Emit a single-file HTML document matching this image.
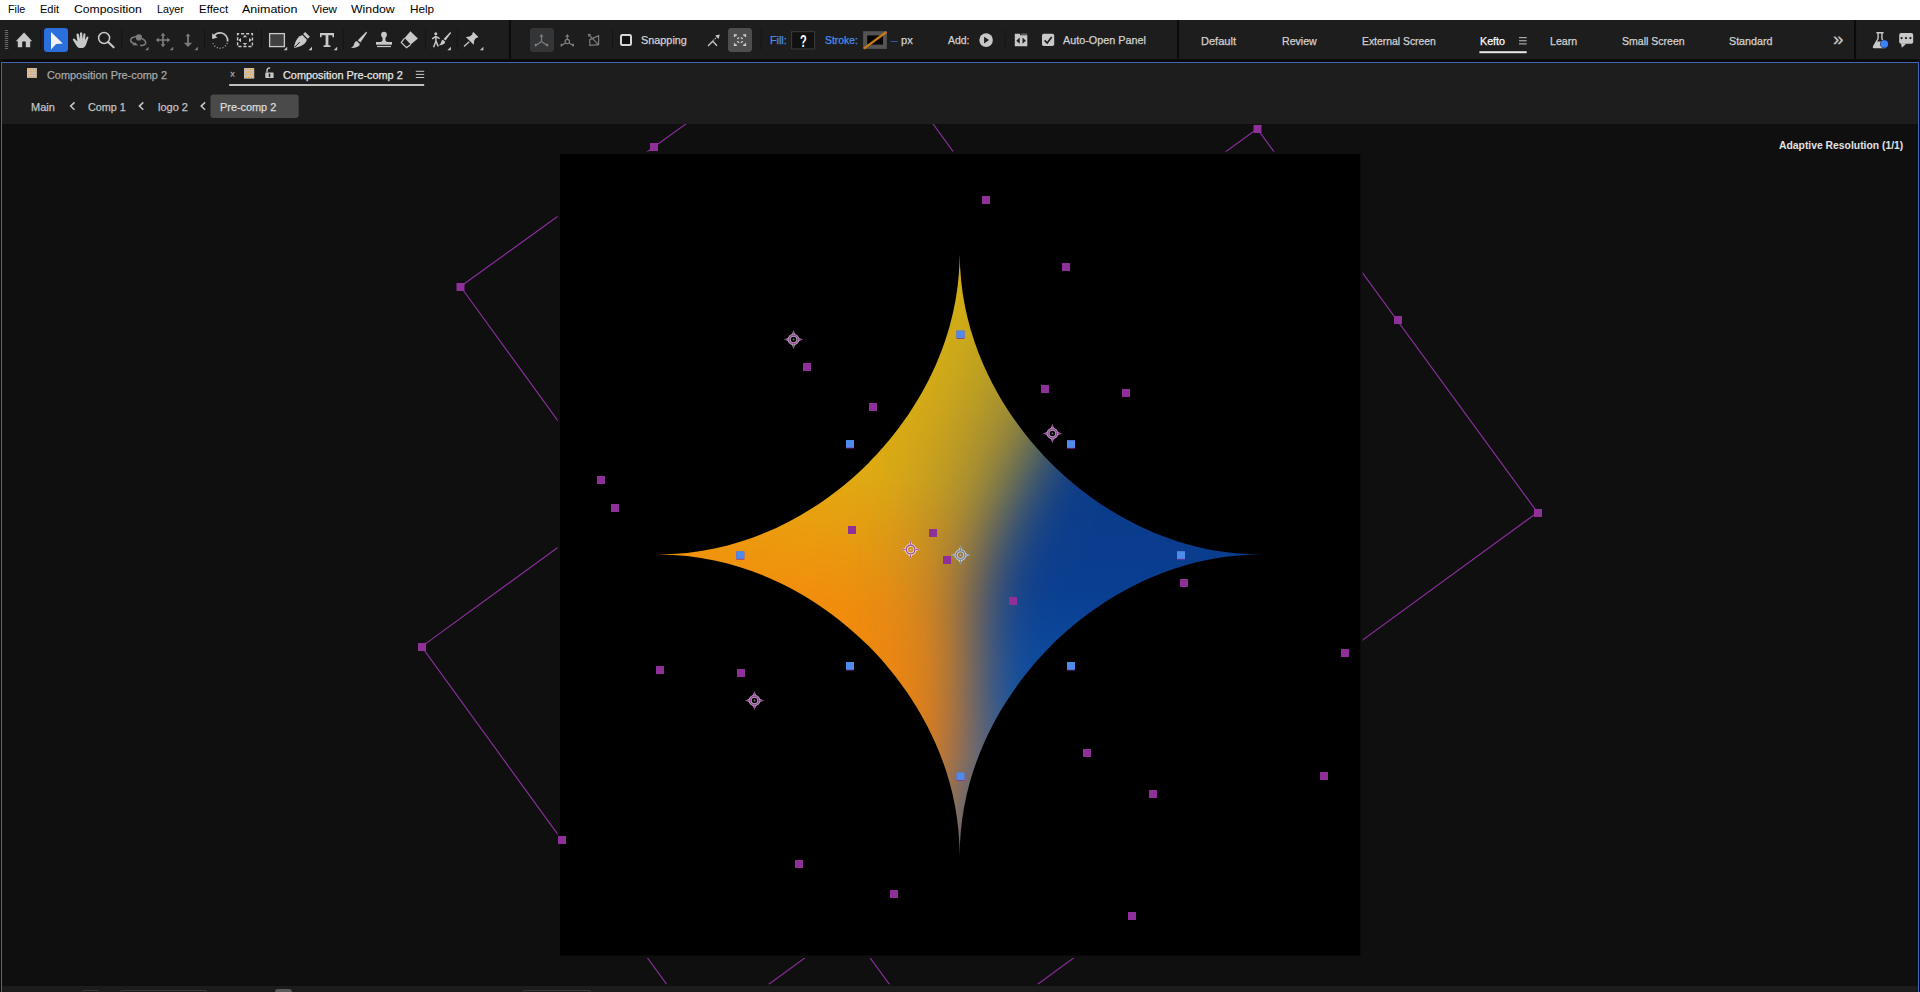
<!DOCTYPE html>
<html lang="en">
<head>
<meta charset="utf-8">
<title>Composition Pre-comp 2</title>
<style>
html,body{margin:0;padding:0;}
html{width:1920px;height:992px;overflow:hidden;}
body{width:1920px;height:992px;overflow:hidden;position:relative;background:#0a0a0a;font-family:"Liberation Sans",sans-serif;}
.abs{position:absolute;}
.t{position:absolute;transform-origin:0 0;-webkit-text-stroke:0.25px currentColor;white-space:pre;line-height:16px;height:16px;font-family:"Liberation Sans",sans-serif;}
.m{-webkit-text-stroke:0;}
#menubar{left:0;top:0;width:1920px;height:20px;background:#ffffff;}
#toolbar{left:0;top:20px;width:1920px;height:39px;background:#1d1d1d;}
#panel{left:1px;top:62px;width:1918px;height:930px;background:#1d1d1d;}
#pborder{left:1px;top:62px;width:1916px;height:929px;border:1px solid #4464b4;border-bottom:none;pointer-events:none;}
#viewerbg{left:2px;top:124px;width:1916px;height:862px;background:#0f0f0f;}
#footer{left:2px;top:986px;width:1916px;height:6px;background:#1c1c1c;}
svg{position:absolute;left:0;top:0;overflow:hidden;}
</style>
</head>
<body>
<div id="menubar" class="abs"></div>
<div id="toolbar" class="abs"></div>
<div id="panel" class="abs"></div>
<div id="viewerbg" class="abs"></div>
<div id="footer" class="abs"></div>
<div class="abs" style="left:82px;top:990px;width:15px;height:1px;border:1px solid #363636;border-bottom:none;border-radius:3px 3px 0 0"></div>
<div class="abs" style="left:120px;top:990px;width:85px;height:1px;border:1px solid #363636;border-bottom:none;border-radius:3px 3px 0 0"></div>
<div class="abs" style="left:275px;top:989px;width:17px;height:3px;background:#5a5a5a;border-radius:3px 3px 0 0"></div>
<div class="abs" style="left:523px;top:990px;width:66px;height:1px;border:1px solid #363636;border-bottom:none;border-radius:3px 3px 0 0"></div>
<svg id="viewer" width="1920" height="992" viewBox="0 0 1920 992">
<defs>
<clipPath id="vclip"><rect x="2" y="124" width="1916" height="862"/></clipPath>
<clipPath id="starclip"><path d="M959.7,252.5 C959.7,357.5 1019.0,431.2 1051.0,463.2 C1083.0,495.2 1156.7,554.5 1261.7,554.5 C1156.7,554.5 1083.0,613.8 1051.0,645.8 C1019.0,677.8 959.7,751.5 959.7,856.5 C959.7,751.5 900.4,677.8 868.4,645.8 C836.4,613.8 762.7,554.5 657.7,554.5 C762.7,554.5 836.4,495.2 868.4,463.2 C900.4,431.2 959.7,357.5 959.7,252.5 Z"/></clipPath>
<linearGradient id="gYO" gradientUnits="userSpaceOnUse" x1="800" y1="330" x2="745" y2="700">
<stop offset="0" stop-color="#d9b012"/><stop offset="0.35" stop-color="#e2ac10"/><stop offset="0.7" stop-color="#f28e0c"/><stop offset="1" stop-color="#f7830a"/></linearGradient>
<linearGradient id="gB" gradientUnits="userSpaceOnUse" x1="1060" y1="440" x2="1040" y2="760">
<stop offset="0" stop-color="#0a3a88"/><stop offset="0.45" stop-color="#0a3e90"/><stop offset="0.8" stop-color="#0c4ea4"/><stop offset="1" stop-color="#2c5c9c"/></linearGradient>
<filter id="blurA" x="-30%" y="-30%" width="160%" height="160%"><feGaussianBlur stdDeviation="30"/></filter>
<filter id="blurB" x="-30%" y="-30%" width="160%" height="160%"><feGaussianBlur stdDeviation="60"/></filter>
<mask id="bmask" maskUnits="userSpaceOnUse" x="560" y="150" width="800" height="810">
<rect x="560" y="150" width="800" height="810" fill="#000"/>
<path filter="url(#blurB)" fill="#fff" fill-opacity="0.5" d="M1095,200 L1050,300 L995,425 L959,491 L948,545 L950,585 L964,630 L975,680 L968,740 L953,800 L938,1000 L1500,1000 L1500,200 Z"/>
<path filter="url(#blurA)" fill="#fff" d="M1160,200 L1115,300 L1060,425 L1024,491 L1000,545 L986,585 L982,630 L983,680 L976,740 L961,800 L946,1000 L1500,1000 L1500,200 Z"/>
</mask>
<pattern id="starpat" patternUnits="userSpaceOnUse" x="600" y="200" width="720" height="720"><rect x="0" y="0" width="720" height="720" fill="#000"/><g transform="translate(-600,-200)"><rect x="600" y="200" width="720" height="720" fill="url(#gYO)"/><rect x="600" y="200" width="720" height="720" fill="url(#gB)" mask="url(#bmask)"/></g></pattern>
</defs>
<g clip-path="url(#vclip)">
<polygon points="460.5,286.5 848,7 1128,392 741,673" fill="none" stroke="#8c2e9e" stroke-width="1.15"/>
<polygon points="421.6,646.6 807,366 1087,752 702,1033" fill="none" stroke="#8c2e9e" stroke-width="1.15"/>
<polygon points="1257.3,128.8 1537.4,512.4 1153,793 872,408" fill="none" stroke="#8c2e9e" stroke-width="1.15"/>
<polygon points="660,670 1044,388.5 1325,774 941,1055" fill="none" stroke="#8c2e9e" stroke-width="1.15"/>
<rect x="557.6" y="151.6" width="805" height="806.4" fill="#0f0f0f"/>
<rect x="2" y="984.2" width="1916" height="2" fill="#0f0f0f"/>
<rect x="560" y="154" width="800.3" height="801.5" fill="#000"/>
<path d="M959.7,252.5 C959.7,357.5 1019.0,431.2 1051.0,463.2 C1083.0,495.2 1156.7,554.5 1261.7,554.5 C1156.7,554.5 1083.0,613.8 1051.0,645.8 C1019.0,677.8 959.7,751.5 959.7,856.5 C959.7,751.5 900.4,677.8 868.4,645.8 C836.4,613.8 762.7,554.5 657.7,554.5 C762.7,554.5 836.4,495.2 868.4,463.2 C900.4,431.2 959.7,357.5 959.7,252.5 Z" fill="url(#starpat)"/>
<rect x="650.0" y="143.0" width="8" height="8" fill="#8e3098"/>
<rect x="982.0" y="196.0" width="8" height="8" fill="#8e3098"/>
<rect x="1062.0" y="263.0" width="8" height="8" fill="#8e3098"/>
<rect x="456.5" y="283.0" width="8" height="8" fill="#8e3098"/>
<rect x="1394.0" y="316.0" width="8" height="8" fill="#8e3098"/>
<rect x="803.0" y="363.0" width="8" height="8" fill="#8e3098"/>
<rect x="1041.0" y="385.0" width="8" height="8" fill="#8e3098"/>
<rect x="1122.0" y="389.0" width="8" height="8" fill="#8e3098"/>
<rect x="869.0" y="403.0" width="8" height="8" fill="#8e3098"/>
<rect x="597.0" y="476.0" width="8" height="8" fill="#8e3098"/>
<rect x="611.0" y="504.0" width="8" height="8" fill="#8e3098"/>
<rect x="1534.0" y="509.0" width="8" height="8" fill="#8e3098"/>
<rect x="848.0" y="526.0" width="8" height="8" fill="#8e3098"/>
<rect x="929.0" y="529.0" width="8" height="8" fill="#8e3098"/>
<rect x="943.0" y="556.0" width="8" height="8" fill="#8e3098"/>
<rect x="1180.0" y="579.0" width="8" height="8" fill="#8e3098"/>
<rect x="1009.0" y="597.0" width="8" height="8" fill="#8e3098"/>
<rect x="418.0" y="643.0" width="8" height="8" fill="#8e3098"/>
<rect x="1341.0" y="649.0" width="8" height="8" fill="#8e3098"/>
<rect x="656.0" y="666.0" width="8" height="8" fill="#8e3098"/>
<rect x="737.0" y="669.0" width="8" height="8" fill="#8e3098"/>
<rect x="1083.0" y="749.0" width="8" height="8" fill="#8e3098"/>
<rect x="1320.0" y="772.0" width="8" height="8" fill="#8e3098"/>
<rect x="1149.0" y="790.0" width="8" height="8" fill="#8e3098"/>
<rect x="558.0" y="836.0" width="8" height="8" fill="#8e3098"/>
<rect x="795.0" y="860.0" width="8" height="8" fill="#8e3098"/>
<rect x="890.0" y="890.0" width="8" height="8" fill="#8e3098"/>
<rect x="1128.0" y="912.0" width="8" height="8" fill="#8e3098"/>
<rect x="1253.5" y="125.0" width="8" height="8" fill="#8e3098"/>
<rect x="956.5" y="330.8" width="8" height="8" fill="#8e3098"/><rect x="956.5" y="330.4" width="8" height="7.6" fill="#4e8cec"/>
<rect x="1177.0" y="551.6" width="8" height="8" fill="#8e3098"/><rect x="1177.0" y="551.2" width="8" height="7.6" fill="#4e8cec"/>
<rect x="956.5" y="772.8" width="8" height="8" fill="#8e3098"/><rect x="956.5" y="772.4" width="8" height="7.6" fill="#4e8cec"/>
<rect x="736.3" y="551.6" width="8" height="8" fill="#8e3098"/><rect x="736.3" y="551.2" width="8" height="7.6" fill="#4e8cec"/>
<rect x="846.0" y="440.4" width="8" height="8" fill="#8e3098"/><rect x="846.0" y="440.0" width="8" height="7.6" fill="#4e8cec"/>
<rect x="1067.0" y="440.6" width="8" height="8" fill="#8e3098"/><rect x="1067.0" y="440.2" width="8" height="7.6" fill="#4e8cec"/>
<rect x="846.0" y="662.4" width="8" height="8" fill="#8e3098"/><rect x="846.0" y="662.0" width="8" height="7.6" fill="#4e8cec"/>
<rect x="1067.0" y="662.4" width="8" height="8" fill="#8e3098"/><rect x="1067.0" y="662.0" width="8" height="7.6" fill="#4e8cec"/>
<g transform="translate(793.5,339.5)"><path d="M0,-9.5L1.8,-4.6L-1.8,-4.6ZM0,9.5L1.8,4.6L-1.8,4.6ZM-9.5,0L-4.6,-1.8L-4.6,1.8ZM9.5,0L4.6,-1.8L4.6,1.8Z" fill="#b9aabb"/><circle r="4.3" fill="none" stroke="#b9aabb" stroke-width="3"/><circle r="4.3" fill="none" stroke="#96489e" stroke-width="1.4"/><path d="M0,-8.5L0,-5M0,8.5L0,5M-8.5,0L-5,0M8.5,0L5,0" stroke="#96489e" stroke-width="1"/><circle r="0.9" fill="#b9aabb" opacity="0.7"/></g>
<g transform="translate(1052.4,433.5)"><path d="M0,-9.5L1.8,-4.6L-1.8,-4.6ZM0,9.5L1.8,4.6L-1.8,4.6ZM-9.5,0L-4.6,-1.8L-4.6,1.8ZM9.5,0L4.6,-1.8L4.6,1.8Z" fill="#b9aabb"/><circle r="4.3" fill="none" stroke="#b9aabb" stroke-width="3"/><circle r="4.3" fill="none" stroke="#96489e" stroke-width="1.4"/><path d="M0,-8.5L0,-5M0,8.5L0,5M-8.5,0L-5,0M8.5,0L5,0" stroke="#96489e" stroke-width="1"/><circle r="0.9" fill="#b9aabb" opacity="0.7"/></g>
<g transform="translate(754.5,700.5)"><path d="M0,-9.5L1.8,-4.6L-1.8,-4.6ZM0,9.5L1.8,4.6L-1.8,4.6ZM-9.5,0L-4.6,-1.8L-4.6,1.8ZM9.5,0L4.6,-1.8L4.6,1.8Z" fill="#b9aabb"/><circle r="4.3" fill="none" stroke="#b9aabb" stroke-width="3"/><circle r="4.3" fill="none" stroke="#96489e" stroke-width="1.4"/><path d="M0,-8.5L0,-5M0,8.5L0,5M-8.5,0L-5,0M8.5,0L5,0" stroke="#96489e" stroke-width="1"/><circle r="0.9" fill="#b9aabb" opacity="0.7"/></g>
<g transform="translate(910.6,549.6)"><path d="M0,-9.5L1.8,-4.6L-1.8,-4.6ZM0,9.5L1.8,4.6L-1.8,4.6ZM-9.5,0L-4.6,-1.8L-4.6,1.8ZM9.5,0L4.6,-1.8L4.6,1.8Z" fill="#ece0da"/><circle r="4.3" fill="none" stroke="#ece0da" stroke-width="3"/><circle r="4.3" fill="none" stroke="#a0529c" stroke-width="1.4"/><path d="M0,-8.5L0,-5M0,8.5L0,5M-8.5,0L-5,0M8.5,0L5,0" stroke="#a0529c" stroke-width="1"/><circle r="0.9" fill="#ece0da" opacity="0.7"/></g>
<g transform="translate(960.5,555.1)"><path d="M0,-9.5L1.8,-4.6L-1.8,-4.6ZM0,9.5L1.8,4.6L-1.8,4.6ZM-9.5,0L-4.6,-1.8L-4.6,1.8ZM9.5,0L4.6,-1.8L4.6,1.8Z" fill="#c2d8f6"/><circle r="4.3" fill="none" stroke="#c2d8f6" stroke-width="3"/><circle r="4.3" fill="none" stroke="#80848e" stroke-width="1.4"/><path d="M0,-8.5L0,-5M0,8.5L0,5M-8.5,0L-5,0M8.5,0L5,0" stroke="#80848e" stroke-width="1"/><circle r="0.9" fill="#c2d8f6" opacity="0.7"/></g>
</g>
</svg>
<div id="pborder" class="abs"></div>
<svg id="icons" width="1920" height="130" viewBox="0 0 1920 130">
<rect x="508.9" y="20" width="2" height="39" fill="#0b0b0b"/>
<rect x="1177" y="20" width="2" height="39" fill="#0b0b0b"/>
<rect x="1854.1" y="20" width="2" height="39" fill="#0b0b0b"/>
<path d="M4.8,30.5h3.4M4.8,32.5h3.4M4.8,34.5h3.4M4.8,36.5h3.4M4.8,38.5h3.4M4.8,40.5h3.4M4.8,42.5h3.4M4.8,44.5h3.4M4.8,46.5h3.4M4.8,48.5h3.4" stroke="#6a6a6a" stroke-width="1"/>
<path d="M40.5,30V50" stroke="#0d0d0d" stroke-width="1" stroke-dasharray="1.4 1.1"/>
<path d="M121.7,30V50" stroke="#0d0d0d" stroke-width="1" stroke-dasharray="1.4 1.1"/>
<path d="M204.6,30V50" stroke="#0d0d0d" stroke-width="1" stroke-dasharray="1.4 1.1"/>
<path d="M261.4,30V50" stroke="#0d0d0d" stroke-width="1" stroke-dasharray="1.4 1.1"/>
<path d="M343.3,30V50" stroke="#0d0d0d" stroke-width="1" stroke-dasharray="1.4 1.1"/>
<path d="M425.4,30V50" stroke="#0d0d0d" stroke-width="1" stroke-dasharray="1.4 1.1"/>
<path d="M457.3,30V50" stroke="#0d0d0d" stroke-width="1" stroke-dasharray="1.4 1.1"/>
<path d="M612.6,30V50" stroke="#0d0d0d" stroke-width="1" stroke-dasharray="1.4 1.1"/>
<path d="M761.2,30V50" stroke="#0d0d0d" stroke-width="1" stroke-dasharray="1.4 1.1"/>
<path d="M1005.3,30V50" stroke="#0d0d0d" stroke-width="1" stroke-dasharray="1.4 1.1"/>
<path fill="#c8c8c8" d="M24.1,32.6L32.2,41.2H30.2V47.3H25.8V41.6H22.2V47.3H17.8V41.2H15.8Z"/>
<rect x="44" y="28" width="24" height="24" rx="3.2" fill="#2b6fdc"/>
<path fill="#f2f2f2" d="M51,32.1L62.8,43.5L56.1,44.1L51,49.6Z"/>
<path fill="#c8c8c8" d="M72.7,39.4Q73.3,38.2 74.6,38.8L77.4,41.4L76.4,34.6Q77.2,32.9 78.8,34L80,39L80,33Q81,31.5 82.2,33L82.6,39L83.5,33.9Q84.5,32.6 85.5,34.1L85,40L86.8,36.7Q87.9,36 88.5,37.3L86.3,44Q85.2,47.6 82.2,48.1L79.2,48.1Q77.2,47.6 75.7,44.6Z"/>
<circle cx="104.1" cy="38" r="5.5" fill="none" stroke="#c8c8c8" stroke-width="1.5"/><path d="M108.1,42.1L113.6,47.3" stroke="#c8c8c8" stroke-width="2.1" stroke-linecap="round"/>
<g fill="none" stroke="#7c7c7c" stroke-width="1.5"><path d="M136.2,36.6Q130.5,37.5 130.6,40.3Q130.9,42.6 134.4,43.6"/><path d="M142,38.5Q146.5,41 145.6,43.6Q144.5,45.6 140,45.5"/></g>
<circle cx="138.9" cy="37.4" r="3.1" fill="#7c7c7c"/><path fill="#7c7c7c" d="M132.2,45.3L135.2,42.2L138,45.4Z"/>
<g stroke="#7c7c7c" stroke-width="1.7"><path d="M157.5,40H168.5M163,34.5V45.5"/></g><path fill="#7c7c7c" d="M163,32.8L165.4,35.8H160.6ZM163,47.2L165.4,44.2H160.6ZM155.8,40L158.8,37.6V42.4ZM170.2,40L167.2,37.6V42.4Z"/>
<path d="M188,35V44" stroke="#7c7c7c" stroke-width="1.8"/><path fill="#7c7c7c" d="M188,33.4L190.4,36.2H185.6ZM188,47L192.2,42.8H183.8Z"/>
<path fill="#7c7c7c" d="M148.5,46.7V50.2H145.0Z"/>
<path fill="#7c7c7c" d="M173.2,46.7V50.2H169.7Z"/>
<path fill="#7c7c7c" d="M197.9,46.7V50.2H194.4Z"/>
<path fill="#c8c8c8" d="M287.2,46.7V50.2H283.7Z"/>
<path fill="#c8c8c8" d="M312,46.7V50.2H308.5Z"/>
<path fill="#c8c8c8" d="M337.2,46.7V50.2H333.7Z"/>
<path fill="#c8c8c8" d="M450.9,46.7V50.2H447.4Z"/>
<path fill="#c8c8c8" d="M483.4,46.7V50.2H479.9Z"/>
<path d="M212.9,38.2A7.5,7.5 0 0 1 227.5,41.5" fill="none" stroke="#c8c8c8" stroke-width="1.7"/>
<path fill="#c8c8c8" d="M212.1,33.2L217.5,37.4L212.4,38.9Z"/>
<path d="M227.2,43A7.5,7.5 0 0 1 212.8,42.6" fill="none" stroke="#a0a0a0" stroke-width="1.4" stroke-dasharray="1 1.9"/>
<rect x="237.6" y="33.7" width="14.8" height="12.8" fill="none" stroke="#c8c8c8" stroke-width="1.4" stroke-dasharray="3.1 1.9" stroke-dashoffset="1.5"/>
<path fill="#c8c8c8" d="M245,34.9L247.2,37.2H242.8ZM245,45.3L247.2,43H242.8ZM238.4,40.1L241,38V42.2ZM251.6,40.1L249,38V42.2Z"/>
<rect x="269.6" y="33.6" width="14.8" height="13" fill="#404040" stroke="#c8c8c8" stroke-width="1.3"/>
<path fill="#c8c8c8" d="M305.2,32L309.9,36.7L307.8,38.8L303.1,34.1Z"/>
<path fill="#c8c8c8" d="M302.3,35L306.9,39.7Q305.8,45.2 297.2,47.3L294,47.9L294.5,44.8Q296.5,36.8 302.3,35Z"/>
<path d="M294.6,47.3L299.8,42.1" stroke="#1d1d1d" stroke-width="1"/>
<path fill="#c8c8c8" d="M320,33H334V37.2H332.4V35.2H328.4V45.2H330.4V47H323.6V45.2H325.6V35.2H321.6V37.2H320Z"/>
<path fill="#c8c8c8" d="M366.2,31.8Q367.2,31.9 366.9,33L360.4,42.6L357.8,40.2Z"/>
<path fill="#c8c8c8" d="M356.9,41.1L359.8,43.9Q359.7,47.6 351,47.9Q354,46.2 354.3,43.4Q354.8,41.4 356.9,41.1Z"/>
<circle cx="384" cy="34.7" r="2.9" fill="#c8c8c8"/>
<path fill="#c8c8c8" d="M382.4,36.6H385.6L385.4,40.2Q385.6,42 388,42H392V44.8H376V42H380Q382.4,42 382.6,40.2Z"/>
<rect x="377" y="45.9" width="14" height="1.2" fill="#c8c8c8"/>
<path fill="#c8c8c8" d="M410.4,31.2L417.9,38.4L410.8,44.4L404.6,38.1Z"/>
<path fill="none" stroke="#c8c8c8" stroke-width="1.2" d="M404.6,38.1L401.3,42.4L406.5,47.6L410.8,44.4"/>
<circle cx="435.8" cy="33.8" r="1.5" fill="#c8c8c8"/>
<path fill="none" stroke="#c8c8c8" stroke-width="1.5" d="M432.2,38.8L435.8,36.4L439.6,38.6M435.9,36V41.2L433.6,47.2M436,41.2L438.2,46.4"/>
<path fill="#c8c8c8" d="M450.2,32Q451.2,32.2 450.8,33.2L445.6,40.6L443.6,39Z"/>
<path fill="#c8c8c8" d="M442.8,39.8L445.2,41.8Q445,45 438.6,45.4Q441,44 441.2,42Q441.4,40.2 442.8,39.8Z"/>
<path fill="#c8c8c8" d="M473.4,32.1L478.4,37Q477,38.2 476,38L474.2,40.6L473.7,44.8L465.8,37L469.8,36.6L472.2,34.6Q472.2,33 473.4,32.1Z"/>
<path d="M469.2,41.8L464,46.6" stroke="#c8c8c8" stroke-width="1.3"/>
<rect x="530" y="28" width="24" height="24" rx="3" fill="#343536"/>
<g stroke="#7e7e7e" stroke-width="1.2" fill="none"><path d="M541.5,41.5V36.0M541.5,41.5L536.9,44.7M541.5,41.5L546.1,44.7"/></g>
<path fill="#7e7e7e" d="M541.5,33.9L543.6,36.7H539.4ZM534.9,43.7L537.9,44.1L536.1,46.5L534.7,46.3ZM548.1,43.7L545.1,44.1L546.9,46.5L548.3,46.3Z"/>
<g stroke="#7e7e7e" stroke-width="1.2" fill="none"><path d="M567.3,39.1V36.0M565.38,42.94L562.6999999999999,44.7M569.2199999999999,42.94L571.9,44.7"/><circle cx="567.3" cy="41.5" r="2.2"/></g>
<path fill="#7e7e7e" d="M567.3,33.9L569.4,36.7H565.1999999999999ZM560.6999999999999,43.7L563.6999999999999,44.1L561.9,46.5L560.5,46.3ZM573.9,43.7L570.9,44.1L572.6999999999999,46.5L574.0999999999999,46.3Z"/>
<g stroke="#7e7e7e" stroke-width="1.2" fill="none"><path d="M590,35.8L598.6,44.8M589.8,39.6L598.6,35.6V44.6L589.8,45.4Z"/></g><path fill="#7e7e7e" d="M587.8,33.8L591.4,34.4L588.6,37.2Z"/>
<rect x="621" y="35.1" width="10" height="10" rx="1.4" fill="#101010" stroke="#d6d6d6" stroke-width="2"/>
<path fill="none" stroke="#c8c8c8" stroke-width="1.3" d="M708,46L712.7,41.3L717,45.8"/><path d="M713.4,40.4L716.6,37.2" stroke="#c8c8c8" stroke-width="1.2" stroke-dasharray="1.2 1"/><path fill="#c8c8c8" d="M719.8,34.4L715.2,35.6L718.6,39Z"/>
<rect x="728" y="28" width="24" height="24" rx="3.4" fill="#4e4e4e"/>
<g fill="none" stroke="#d2d2d2" stroke-width="1.4"><path d="M734.6,37V35H736.8M743.2,35H745.4V37M745.4,43.2V45.2H743.2M736.8,45.2H734.6V43.2"/><path d="M737.6,39.2Q737.8,37.8 739.2,37.6M740.8,37.6Q742.2,37.8 742.4,39.2M742.4,41Q742.2,42.4 740.8,42.6M739.2,42.6Q737.8,42.4 737.6,41"/></g>
<rect x="791.6" y="31.7" width="23" height="17.2" fill="#111111" stroke="#3c3c3c" stroke-width="1"/>
<rect x="863.1" y="31.2" width="23.8" height="17.7" fill="#545454"/><rect x="867.2" y="35.4" width="15.8" height="9.2" fill="#050505"/><path d="M863.8,48.6L886.4,32" stroke="#cf7a14" stroke-width="2.2"/>
<circle cx="986.1" cy="40.1" r="6.8" fill="#c8c8c8"/><path fill="#1d1d1d" d="M984.1,36.7V43.5L989,40.1Z"/>
<path fill="#c8c8c8" d="M1014.8,33.8H1020V35.2H1027.3V46.3H1014.8Z"/><rect x="1021" y="33.7" width="6.3" height="0.8" fill="#9a9a9a"/>
<path fill="#1d1d1d" d="M1016.3,40.7L1019.7,37.6V43.8ZM1025.9,40.7L1022.5,37.6V43.8Z"/>
<rect x="1042" y="33.8" width="12.2" height="12.2" rx="1.8" fill="#c8c8c8"/><path d="M1044.6,40.3L1047.2,43L1051.7,36.9" fill="none" stroke="#1d1d1d" stroke-width="1.7"/>
<rect x="1479.4" y="51.2" width="47.3" height="2" fill="#e8e8e8"/>
<path d="M1519,37.7h7.7M1519,40.8h7.7M1519,43.9h7.7" stroke="#c8c8c8" stroke-width="1"/>
<path fill="#c8c8c8" d="M1876.4,32H1883.6V33.5H1882.6V38.4L1886.6,46.6Q1886.8,48.2 1885.2,48.2H1873.8Q1872.4,48.2 1872.8,46.6L1877.4,38.4V33.5H1876.4Z"/>
<path fill="#1d1d1d" d="M1878.8,33.6H1881.2V38.8L1882.6,41.6H1877.2L1878.8,38.8Z"/>
<circle cx="1884.3" cy="44" r="4.3" fill="#14244a"/><circle cx="1884.3" cy="44" r="3.8" fill="#3b82f6"/>
<rect x="1899.2" y="33.1" width="14" height="10.7" rx="1.8" fill="#c8c8c8"/><path fill="#c8c8c8" d="M1901,43.4L1901.9,47.8L1906.4,43.4Z"/>
<circle cx="1901.6" cy="38.1" r="1.15" fill="#1d1d1d"/><circle cx="1906" cy="38.1" r="1.15" fill="#1d1d1d"/><circle cx="1910.4" cy="38.1" r="1.15" fill="#1d1d1d"/>
<rect x="27" y="68" width="9.9" height="9.9" fill="#cdc5bc"/>
<circle cx="28.3" cy="69.2" r="0.75" fill="#e8a030"/>
<circle cx="29.1" cy="71.7" r="0.75" fill="#e8a030"/>
<circle cx="28.3" cy="74.2" r="0.75" fill="#e8a030"/>
<circle cx="29.1" cy="76.7" r="0.75" fill="#e8a030"/>
<circle cx="30.7" cy="69.2" r="0.75" fill="#e8a030"/>
<circle cx="31.5" cy="71.7" r="0.75" fill="#e8a030"/>
<circle cx="30.7" cy="74.2" r="0.75" fill="#e8a030"/>
<circle cx="31.5" cy="76.7" r="0.75" fill="#e8a030"/>
<circle cx="33.1" cy="69.2" r="0.75" fill="#e8a030"/>
<circle cx="33.9" cy="71.7" r="0.75" fill="#e8a030"/>
<circle cx="33.1" cy="74.2" r="0.75" fill="#e8a030"/>
<circle cx="33.9" cy="76.7" r="0.75" fill="#e8a030"/>
<circle cx="35.5" cy="69.2" r="0.75" fill="#e8a030"/>
<circle cx="36.3" cy="71.7" r="0.75" fill="#e8a030"/>
<circle cx="35.5" cy="74.2" r="0.75" fill="#e8a030"/>
<circle cx="36.3" cy="76.7" r="0.75" fill="#e8a030"/>
<rect x="244" y="68" width="10.2" height="10.6" fill="#cdc5bc"/>
<circle cx="245.3" cy="69.2" r="0.75" fill="#e8a030"/>
<circle cx="246.1" cy="71.9" r="0.75" fill="#e8a030"/>
<circle cx="245.3" cy="74.6" r="0.75" fill="#e8a030"/>
<circle cx="246.1" cy="77.3" r="0.75" fill="#e8a030"/>
<circle cx="247.8" cy="69.2" r="0.75" fill="#e8a030"/>
<circle cx="248.6" cy="71.9" r="0.75" fill="#e8a030"/>
<circle cx="247.8" cy="74.6" r="0.75" fill="#e8a030"/>
<circle cx="248.6" cy="77.3" r="0.75" fill="#e8a030"/>
<circle cx="250.3" cy="69.2" r="0.75" fill="#e8a030"/>
<circle cx="251.1" cy="71.9" r="0.75" fill="#e8a030"/>
<circle cx="250.3" cy="74.6" r="0.75" fill="#e8a030"/>
<circle cx="251.1" cy="77.3" r="0.75" fill="#e8a030"/>
<circle cx="252.8" cy="69.2" r="0.75" fill="#e8a030"/>
<circle cx="253.6" cy="71.9" r="0.75" fill="#e8a030"/>
<circle cx="252.8" cy="74.6" r="0.75" fill="#e8a030"/>
<circle cx="253.6" cy="77.3" r="0.75" fill="#e8a030"/>
<rect x="265.3" y="72.5" width="8.3" height="5.6" rx="0.6" fill="#c8c8c8"/><path d="M267,72.6V70.6Q267,67.9 270.2,67.9" fill="none" stroke="#c8c8c8" stroke-width="1.4"/><path d="M269.5,74.2V76.6" stroke="#1d1d1d" stroke-width="1.5" stroke-linecap="round"/>
<path d="M415.8,71.3h8.4M415.8,74.4h8.4M415.8,77.5h8.4" stroke="#c8c8c8" stroke-width="1"/>
<rect x="229.2" y="84.1" width="195" height="1.8" fill="#d2d2d2"/>
<rect x="210.5" y="94.5" width="88.2" height="23.5" rx="3.2" fill="#4a4a4a"/>
<path d="M74.5,102.4L70.6,106.1L74.5,109.8" fill="none" stroke="#c8c8c8" stroke-width="1.5"/>
<path d="M143.3,102.4L139.4,106.1L143.3,109.8" fill="none" stroke="#c8c8c8" stroke-width="1.5"/>
<path d="M205.1,102.4L201.2,106.1L205.1,109.8" fill="none" stroke="#c8c8c8" stroke-width="1.5"/>
<g fill="none" stroke="#3c3c3c" stroke-width="1"></g>
</svg>
<div class="t m" style="left:7.75px;top:1.47px;font-size:11.5px;font-weight:400;color:#000;transform:scaleX(0.9309)">File</div>
<div class="t m" style="left:39.75px;top:1.47px;font-size:11.5px;font-weight:400;color:#000;transform:scaleX(0.9582)">Edit</div>
<div class="t m" style="left:73.75px;top:1.47px;font-size:11.5px;font-weight:400;color:#000;transform:scaleX(1.0615)">Composition</div>
<div class="t m" style="left:157.00px;top:1.47px;font-size:11.5px;font-weight:400;color:#000;transform:scaleX(0.9294)">Layer</div>
<div class="t m" style="left:198.75px;top:1.47px;font-size:11.5px;font-weight:400;color:#000;transform:scaleX(1.0016)">Effect</div>
<div class="t m" style="left:242.10px;top:1.47px;font-size:11.5px;font-weight:400;color:#000;transform:scaleX(1.0833)">Animation</div>
<div class="t m" style="left:311.90px;top:1.47px;font-size:11.5px;font-weight:400;color:#000;transform:scaleX(1.0114)">View</div>
<div class="t m" style="left:351.25px;top:1.47px;font-size:11.5px;font-weight:400;color:#000;transform:scaleX(1.0695)">Window</div>
<div class="t m" style="left:409.60px;top:1.47px;font-size:11.5px;font-weight:400;color:#000;transform:scaleX(1.0209)">Help</div>
<div class="t" style="left:640.80px;top:32.19px;font-size:11px;font-weight:400;color:#d2d2d2;transform:scaleX(0.9871)">Snapping</div>
<div class="t" style="left:770.00px;top:32.19px;font-size:11px;font-weight:400;color:#4a8df0;transform:scaleX(0.9761)">Fill:</div>
<div class="t" style="left:825.00px;top:32.19px;font-size:11px;font-weight:400;color:#4a8df0;transform:scaleX(0.9467)">Stroke:</div>
<div class="t" style="left:891.30px;top:32.19px;font-size:11px;font-weight:400;color:#2f5fa8;transform:scaleX(1.0776)">–</div>
<div class="t" style="left:900.90px;top:32.19px;font-size:11px;font-weight:400;color:#d2d2d2;transform:scaleX(1.0151)">px</div>
<div class="t" style="left:947.50px;top:32.19px;font-size:11px;font-weight:400;color:#d2d2d2;transform:scaleX(0.9496)">Add:</div>
<div class="t" style="left:1063.30px;top:32.19px;font-size:11px;font-weight:400;color:#d2d2d2;transform:scaleX(0.9835)">Auto-Open Panel</div>
<div class="t" style="left:1201.25px;top:33.19px;font-size:11px;font-weight:400;color:#d2d2d2;transform:scaleX(1.0040)">Default</div>
<div class="t" style="left:1281.50px;top:33.19px;font-size:11px;font-weight:400;color:#d2d2d2;transform:scaleX(0.9632)">Review</div>
<div class="t" style="left:1361.70px;top:33.19px;font-size:11px;font-weight:400;color:#d2d2d2;transform:scaleX(0.9442)">External Screen</div>
<div class="t" style="left:1480.40px;top:33.19px;font-size:11px;font-weight:400;color:#ffffff;transform:scaleX(0.9732)">Kefto</div>
<div class="t" style="left:1550.20px;top:33.19px;font-size:11px;font-weight:400;color:#d2d2d2;transform:scaleX(0.9630)">Learn</div>
<div class="t" style="left:1622.00px;top:33.19px;font-size:11px;font-weight:400;color:#d2d2d2;transform:scaleX(0.9569)">Small Screen</div>
<div class="t" style="left:1729.00px;top:33.19px;font-size:11px;font-weight:400;color:#d2d2d2;transform:scaleX(0.9741)">Standard</div>
<div class="t" style="left:47.00px;top:66.99px;font-size:11px;font-weight:400;color:#a8a8a8;transform:scaleX(0.9912)">Composition Pre-comp 2</div>
<div class="t" style="left:283.25px;top:66.99px;font-size:11px;font-weight:400;color:#e6e6e6;transform:scaleX(0.9892)">Composition Pre-comp 2</div>
<div class="t" style="left:31.25px;top:99.39px;font-size:11px;font-weight:400;color:#c4c4c4;transform:scaleX(0.9961)">Main</div>
<div class="t" style="left:88.00px;top:99.39px;font-size:11px;font-weight:400;color:#c4c4c4;transform:scaleX(0.9797)">Comp 1</div>
<div class="t" style="left:157.50px;top:99.39px;font-size:11px;font-weight:400;color:#c4c4c4;transform:scaleX(1.0005)">logo 2</div>
<div class="t" style="left:220.00px;top:99.39px;font-size:11px;font-weight:400;color:#dcdcdc;transform:scaleX(0.9893)">Pre-comp 2</div>
<div class="t m" style="left:1779.00px;top:136.99px;font-size:11px;font-weight:700;color:#e2e2e2;transform:scaleX(0.9414)">Adaptive Resolution (1/1)</div>
<div class="t m" style="left:799.90px;top:33.28px;font-size:16.5px;font-weight:700;color:#ffffff;transform:scaleX(0.6638)">?</div>
<div class="t" style="left:229.60px;top:65.72px;font-size:11.5px;font-weight:400;color:#b4b4b4;transform:scaleX(0.7442)">×</div>
<div class="t" style="left:1832.80px;top:30.62px;font-size:19px;font-weight:400;color:#c8c8c8;transform:scaleX(0.9832)">»</div>
</body>
</html>
